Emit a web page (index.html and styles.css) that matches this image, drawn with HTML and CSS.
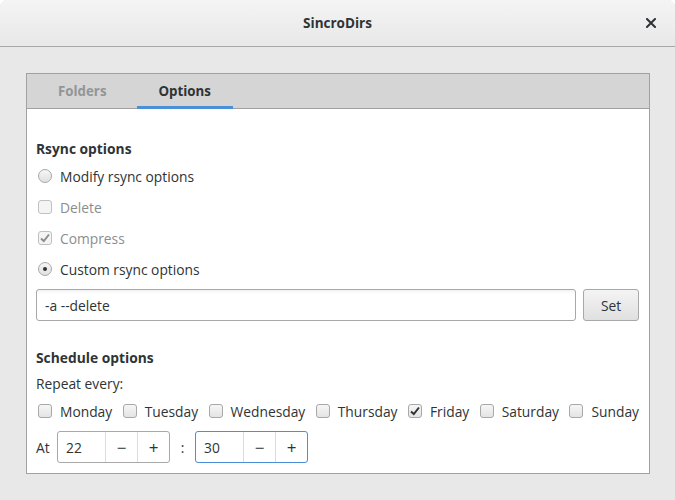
FILE: index.html
```html
<!DOCTYPE html>
<html>
<head>
<meta charset="utf-8">
<link rel="stylesheet" href="styles.css">
</head>
<body>
<div class="window">
  <header class="titlebar">
    <div class="title">SincroDirs</div>
    <button class="close" aria-label="Close">
      <svg width="10" height="10" viewBox="0 0 10 10"><path d="M1 1 L9 9 M9 1 L1 9" stroke="#2e3436" stroke-width="2" stroke-linecap="square"/></svg>
    </button>
  </header>
  <main class="client">
    <div class="notebook">
      <div class="tabs">
        <div class="tab">Folders</div>
        <div class="tab active">Options</div>
      </div>
      <div class="page">
        <div class="heading">Rsync options</div>
        <label class="row"><span class="radio"></span><span>Modify rsync options</span></label>
        <label class="row disabled"><span class="check"></span><span>Delete</span></label>
        <label class="row disabled"><span class="check checked"><svg width="12" height="12" viewBox="0 0 12 12"><path d="M2 6.5 L4.8 9 L10 2.5" fill="none" stroke="#8b8e8f" stroke-width="2"/></svg></span><span>Compress</span></label>
        <label class="row"><span class="radio on"></span><span>Custom rsync options</span></label>
        <div class="entry-row">
          <div class="entry">-a --delete</div>
          <button class="btn">Set</button>
        </div>
        <div class="heading sched">Schedule options</div>
        <div class="label">Repeat every:</div>
        <div class="days">
          <label class="day"><span class="check"></span><span>Monday</span></label>
          <label class="day"><span class="check"></span><span>Tuesday</span></label>
          <label class="day"><span class="check"></span><span>Wednesday</span></label>
          <label class="day"><span class="check"></span><span>Thursday</span></label>
          <label class="day"><span class="check checked"><svg width="12" height="12" viewBox="0 0 12 12"><path d="M2 6.5 L4.8 9 L10 2.5" fill="none" stroke="#2e3436" stroke-width="2"/></svg></span><span>Friday</span></label>
          <label class="day"><span class="check"></span><span>Saturday</span></label>
          <label class="day"><span class="check"></span><span>Sunday</span></label>
        </div>
        <div class="time-row">
          <span class="at">At</span>
          <div class="spin">
            <div class="spin-val">22</div>
            <div class="spin-btn">&#8722;</div>
            <div class="spin-btn">+</div>
          </div>
          <span class="colon">:</span>
          <div class="spin focus">
            <div class="spin-val">30</div>
            <div class="spin-btn">&#8722;</div>
            <div class="spin-btn">+</div>
          </div>
        </div>
      </div>
    </div>
  </main>
</div>
</body>
</html>
```
FILE: styles.css
```css
html { background: #ffffff; }
body {
  margin: 0;
  font-family: "Open Sans", "DejaVu Sans", sans-serif;
  font-size: 13.8px;
  color: #2e3436;
}
.window {
  width: 675px;
  height: 500px;
  background: #e8e8e8;
  border-radius: 7px 7px 0 0;
  overflow: hidden;
  display: flex;
  flex-direction: column;
}
.titlebar {
  height: 46px;
  flex: none;
  background: linear-gradient(#f4f4f4, #e8e8e8);
  border-bottom: 1px solid #a8a8a8;
  display: flex;
  align-items: center;
  justify-content: center;
  position: relative;
}
.title {
  font-weight: 700;
  font-size: 13.5px;
}
.close {
  position: absolute;
  right: 18px;
  top: 17px;
  width: 12px;
  height: 12px;
  border: 0;
  padding: 0;
  background: none;
  display: flex;
  align-items: center;
  justify-content: center;
}
.client {
  flex: 1;
  padding: 26px 25px 26px 26px;
}
.notebook {
  border: 1px solid #a1a1a1;
  height: 399px;
  background: #ffffff;
  display: flex;
  flex-direction: column;
}
.tabs {
  height: 34px;
  flex: none;
  background: #d5d5d5;
  border-bottom: 1px solid #a1a1a1;
  display: flex;
  padding-left: 9px;
  gap: 8px;
}
.tab {
  padding: 0 22px;
  display: flex;
  align-items: center;
  font-weight: 700;
  font-size: 13.3px;
  color: #929595;
  border-bottom: 3px solid transparent;
  margin-bottom: -1px;
  padding-top: 2px;
}
.tab.active {
  color: #2e3436;
  border-bottom-color: #4a90d9;
}
.page {
  flex: 1;
  padding: 31px 10px 0 9px;
  display: flex;
  flex-direction: column;
}
.heading {
  font-weight: 700;
  height: 18px;
  line-height: 18px;
  margin-bottom: 9px;
}
.row {
  display: flex;
  align-items: center;
  gap: 8px;
  height: 18px;
  margin-bottom: 13px;
  padding-left: 2px;
}
.row.disabled { color: #8b8e8f; }
.radio {
  width: 14px;
  height: 14px;
  border: 1px solid #a8a8a8;
  border-radius: 50%;
  box-sizing: border-box;
  background: linear-gradient(#f6f6f6, #e0e0e0);
  display: flex;
  align-items: center;
  justify-content: center;
}
.radio.on::after {
  content: "";
  width: 4px;
  height: 4px;
  border-radius: 50%;
  background: #2e3436;
}
.check {
  width: 14px;
  height: 14px;
  border: 1px solid #a8a8a8;
  border-radius: 3px;
  box-sizing: border-box;
  background: linear-gradient(#f6f6f6, #e4e4e4);
  display: flex;
  align-items: center;
  justify-content: center;
  flex: none;
}
.disabled .check {
  border-color: #c0c0c0;
  background: #f4f4f4;
}
.entry-row {
  display: flex;
  gap: 7px;
  margin-top: -2px;
}
.entry {
  flex: 1;
  height: 32px;
  box-sizing: border-box;
  border: 1px solid #a8a8a8;
  border-radius: 3px;
  background: linear-gradient(#f2f2f2 0, #ffffff 4px, #ffffff 100%);
  display: flex;
  align-items: center;
  padding-left: 8px;
}
.btn {
  width: 56px;
  height: 32px;
  box-sizing: border-box;
  border: 1px solid #a8a8a8;
  border-radius: 3px;
  background: linear-gradient(#f4f4f4, #e0e0e0);
  font: inherit;
  color: #2e3436;
  padding: 0;
}
.heading.sched {
  margin-top: 28px;
  margin-bottom: 8px;
}
.label {
  height: 18px;
  line-height: 18px;
  margin-bottom: 9px;
}
.days {
  display: flex;
  justify-content: space-between;
  padding-left: 2px;
  height: 18px;
  align-items: center;
}
.day {
  display: flex;
  align-items: center;
  gap: 8px;
}
.time-row {
  display: flex;
  align-items: center;
  margin-top: 11px;
  height: 32px;
}
.at { width: 21px; }
.colon { width: 25px; text-align: center; }
.spin {
  display: flex;
  width: 113px;
  height: 32px;
  box-sizing: border-box;
  border: 1px solid #a8a8a8;
  border-radius: 3px;
  background: #ffffff;
}
.spin.focus { border-color: #4a90d9; }
.spin-val {
  width: 47px;
  box-sizing: border-box;
  padding-left: 8px;
  display: flex;
  align-items: center;
}
.spin-btn {
  flex: 1;
  border-left: 1px solid #dcdcdc;
  display: flex;
  align-items: center;
  justify-content: center;
  font-size: 17px;
}
```
